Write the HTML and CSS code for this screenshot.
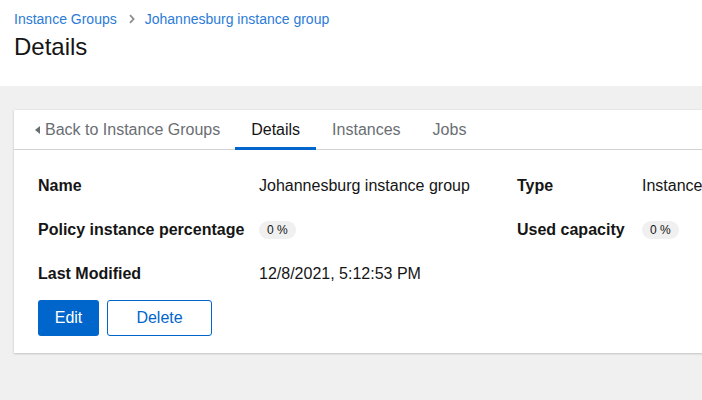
FILE: index.html
```html
<!DOCTYPE html>
<html>
<head>
<meta charset="utf-8">
<link rel="stylesheet" href="styles.css">
</head>
<body>
<div class="page">
  <header class="page-header">
    <nav class="breadcrumb">
      <a class="crumb">Instance Groups</a>
      <svg class="chev" viewBox="0 0 8 10" width="8" height="10"><path d="M2 1.2 L5.6 5 L2 8.8" fill="none" stroke="#8a8d90" stroke-width="1.8"/></svg>
      <a class="crumb">Johannesburg instance group</a>
    </nav>
    <h1 class="title">Details</h1>
  </header>
  <main class="main">
    <section class="card">
      <div class="tabs">
        <div class="tab back"><svg class="caret" viewBox="0 0 5 8" width="5" height="8"><path d="M5 0 L0 4 L5 8 Z" fill="#6a6e73"/></svg>Back to Instance Groups</div>
        <div class="tab active">Details</div>
        <div class="tab">Instances</div>
        <div class="tab">Jobs</div>
      </div>
      <div class="body">
        <dl class="list">
          <dt>Name</dt><dd>Johannesburg instance group</dd>
          <dt>Type</dt><dd>Instance group</dd>
          <dt>Policy instance percentage</dt><dd><span class="badge">0 %</span></dd>
          <dt>Used capacity</dt><dd><span class="badge">0 %</span></dd>
          <dt>Last Modified</dt><dd>12/8/2021, 5:12:53 PM</dd>
        </dl>
        <div class="actions">
          <button class="btn primary">Edit</button>
          <button class="btn secondary">Delete</button>
        </div>
      </div>
    </section>
  </main>
</div>
</body>
</html>
```
FILE: styles.css
```css
html, body {
  margin: 0;
  padding: 0;
}
body {
  font-family: "Liberation Sans", Arial, sans-serif;
  color: #151515;
  background: #f0f0f0;
  overflow: hidden;
}
.page {
  width: 702px;
  height: 400px;
  overflow: hidden;
  display: flex;
  flex-direction: column;
}
.page-header {
  background: #fff;
  height: 86px;
  box-sizing: border-box;
  padding: 10px 14px 0;
}
.breadcrumb {
  display: flex;
  align-items: center;
  font-size: 14px;
  line-height: 18px;
  height: 18px;
}
.crumb {
  color: #2b7bd6;
}
.chev {
  margin: 0 9px 0 11px;
}
.title {
  margin: 4px 0 0;
  font-size: 24px;
  line-height: 30px;
  font-weight: 400;
}
.main {
  flex: 1;
  padding: 24px 0 0 14px;
}
.card {
  width: 760px;
  background: #fff;
  box-shadow: 0 1px 2px rgba(3,3,3,0.16), 0 0 2px rgba(3,3,3,0.08);
}
.tabs {
  display: flex;
  border-bottom: 1px solid #d2d2d2;
  padding-left: 5px;
  height: 39px;
}
.tab {
  padding: 0 16px;
  font-size: 16px;
  line-height: 40px;
  color: #6a6e73;
  display: flex;
  align-items: center;
  position: relative;
  height: 39px;
}
.tab.back {
  padding-right: 15px;
}
.tab.back .caret {
  margin-right: 5px;
}
.tab.active {
  color: #151515;
}
.tab.active::after {
  content: "";
  position: absolute;
  left: 0;
  right: 0;
  bottom: -1px;
  height: 3px;
  background: #06c;
}
.body {
  padding: 24px 24px 17px;
}
.list {
  margin: 0;
  display: grid;
  grid-template-columns: 221px 258px 125px 1fr;
  row-gap: 20px;
  font-size: 16px;
  line-height: 24px;
}
.list dt {
  font-weight: 700;
}
.list dd {
  margin: 0;
  white-space: nowrap;
  display: flex;
  align-items: center;
}
.badge {
  display: inline-block;
  background: #f0f0f0;
  border-radius: 30px;
  font-size: 12px;
  line-height: 18px;
  padding: 0 8px;
  color: #151515;
}
.actions {
  display: flex;
  gap: 8px;
  margin-top: 14px;
}
.btn {
  font-family: inherit;
  font-size: 16px;
  line-height: 24px;
  height: 36px;
  border-radius: 3px;
  padding: 0 16px;
  cursor: pointer;
}
.btn.primary {
  background: #06c;
  color: #fff;
  border: none;
  width: 61px;
}
.btn.secondary {
  background: #fff;
  color: #06c;
  border: 1px solid #06c;
  width: 105px;
}
```
